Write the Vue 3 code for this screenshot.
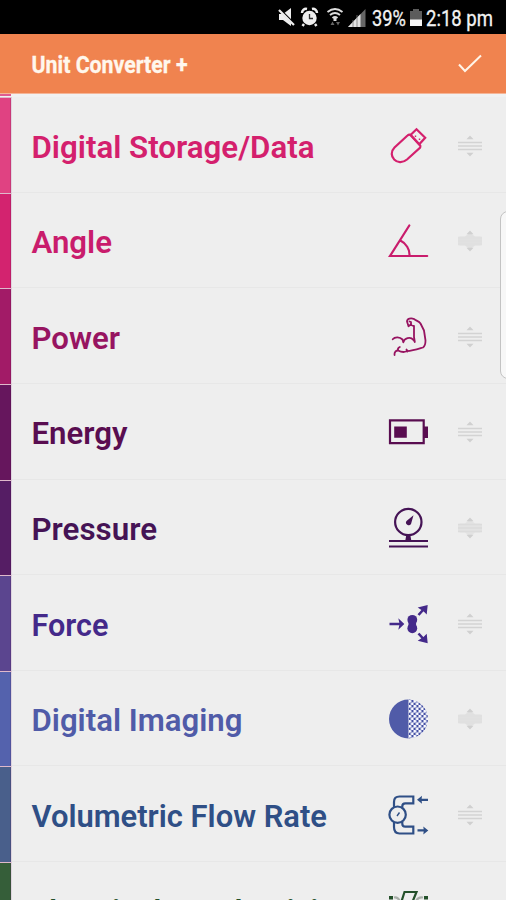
<script setup>
const rows = [
  { label: 'Digital Storage/Data', width: 283, baseline: 37, color: '#d4206d', strip: '#e04282', icon: 'usb', handle: 'lines' },
  { label: 'Angle', width: 80.5, baseline: 37, color: '#c91c6c', strip: '#d3236f', icon: 'angle', handle: 'solid' },
  { label: 'Power', width: 88.5, baseline: 37, color: '#971461', strip: '#a21b67', icon: 'power', handle: 'lines' },
  { label: 'Energy', width: 96, baseline: 37, color: '#590d50', strip: '#66165d', icon: 'energy', handle: 'lines' },
  { label: 'Pressure', width: 125.5, baseline: 37, color: '#451355', strip: '#551d64', icon: 'pressure', handle: 'mixed' },
  { label: 'Force', width: 77, baseline: 37, color: '#44298a', strip: '#5b458f', icon: 'force', handle: 'lines' },
  { label: 'Digital Imaging', width: 211, baseline: 37, color: '#505ba8', strip: '#5462ad', icon: 'imaging', handle: 'solid' },
  { label: 'Volumetric Flow Rate', width: 295.5, baseline: 37, color: '#2f4f86', strip: '#495f8b', icon: 'flow', handle: 'lines' },
  { label: 'Electrical Conductivity', width: 313, baseline: 36.2, color: '#24502a', strip: '#355e39', icon: 'conductivity', handle: 'lines' },
]
</script>

<template>
  <div class="screen">
    <div class="status">
      <svg class="status-icons" width="96" height="34" viewBox="0 0 96 34">
        <g fill="#eee">
          <path d="M2 14h4l8-6v18l-8-6H2z" />
          <path d="M1 8l16 16" stroke="#000" stroke-width="2.500" />
          <path d="M2 10l15 15" stroke="#eee" stroke-width="2.200" />
          <circle cx="32.500" cy="18" r="7.200" />
          <path d="M25 13a4 4 0 0 1 5-4M40 13a4 4 0 0 0-5-4M27 24l-1.500 2M38 24l1.500 2" stroke="#eee" stroke-width="2.500" fill="none" />
          <path d="M32.500 14v4.500h3.500" fill="none" stroke="#333" stroke-width="1.300" />
        </g>
        <g fill="none" stroke="#ddd" stroke-width="1.900">
          <path d="M50.500 12q7.500-6 15 0M53 15q5-4 10 0M55.500 18q2.500-2 5 0" />
          <path d="M58 17v4" stroke-width="3" />
        </g>
        <path d="M53.500 25l2-3.500 2 3.500zM59 22h4l-2 3.500z" fill="#666" />
        <path d="M71 27L88.500 9v18z" fill="#666" />
        <path d="M71 27L83.500 14v13z" fill="#e4e4e4" />
        <path d="M76 27v-7M80 27V15" stroke="#777" stroke-width=".8" />
      </svg>
      <svg class="status-text" width="36" height="34">
        <text x="0" y="25.500" textLength="34" lengthAdjust="spacingAndGlyphs">39%</text>
      </svg>
      <svg class="battery" width="12" height="34" viewBox="0 0 12 34">
        <path d="M3 9h6v2h3v15H0V11h3z" fill="#5c5c5c" />
        <path d="M0 19.500h12V26H0z" fill="#f5f5f5" />
      </svg>
      <svg class="status-text" width="70" height="34">
        <text x="0" y="25.500" textLength="67" lengthAdjust="spacingAndGlyphs">2:18 pm</text>
      </svg>
    </div>

    <header class="bar">
      <svg class="title" width="160" height="59">
        <text x="-0.500" y="39.300" textLength="156" lengthAdjust="spacingAndGlyphs">Unit Converter +</text>
      </svg>
      <svg width="26" height="20" viewBox="0 0 26 20">
        <path d="M2 10.500L8 17 24 1.500" fill="none" stroke="#fff5e9" stroke-width="2" />
      </svg>
    </header>

    <main class="list">
      <div class="previous">
        <div class="previous-strip"></div>
      </div>
      <div v-for="row in rows" :key="row.label" class="row" :style="{ color: row.color }">
        <div class="strip" :style="{ backgroundColor: row.strip }"></div>
        <div class="content">
          <svg class="label" width="340" height="50">
            <text x="-0.500" :y="row.baseline" :textLength="row.width" lengthAdjust="spacingAndGlyphs">{{ row.label }}</text>
          </svg>
          <svg class="icon" width="48" height="48" viewBox="0 0 48 48" fill="none" stroke="currentColor" stroke-width="2.200">
            <g v-if="row.icon === 'usb'">
              <path d="M23.500 13.500L10.500 25.500C2.500 33.500 13.500 45.500 23 37.500L36.200 25.500Q37 24 35.500 22.700L26.600 12.800Q25 12 23.500 13.500z" />
              <path d="M26.500 13L32.500 7.300 41.200 15.800 35.200 22.300z" />
              <path d="M31.500 13.500v1.500M35.500 16.500v1.500" stroke-width="1.400" />
            </g>
            <g v-else-if="row.icon === 'angle'" stroke-linecap="round">
              <path d="M25.300 8.500L6 39h37.200M16 23.300c6 3 10 9 9.500 15.500" />
            </g>
            <g v-else-if="row.icon === 'power'" stroke-width="1.800" stroke-linecap="round" stroke-linejoin="round">
              <path d="M8.700 26.300C11 23.500 16 24 18.500 26.500l.8 2.800c1-4 7-6 10-2.500l1.500 2M30 13v11l.8 5M30 13c-1.700 0-2.500-.7-3.200-1.500l-2.300 1.700-1.500-4.700c0-3 4-4 7-2.500 2 1.700 5 2 6.500 4.500l3.500 7 1.500 10c0 3.500-1 6-2.500 7-5 1.500-10 3.300-16 3.700M10.500 42c-.3-3 1.500-4.500 3.500-4.500-.5-2 .5-3 1.800-3.500M14 37.500c3 1.500 6 2 8.500.8M22.500 36.500l1 2" />
              <path d="M25.500 8.500l1.500.5v3" />
            </g>
            <g v-else-if="row.icon === 'energy'">
              <path d="M6 12.300h33.700v22.900H6z" />
              <path d="M40 18.500h4V30h-4zM10.200 18.500h12.600v11.300H10.200z" fill="currentColor" stroke="none" />
            </g>
            <g v-else-if="row.icon === 'pressure'">
              <circle cx="24.300" cy="18" r="13.200" />
              <path d="M22.300 31h4l1 5.500h-6zM29.500 11.300L27 20a2.600 2.600 0 1 1-4.500-3z" fill="currentColor" stroke="none" />
              <path d="M5 37h39M5 42.500h39" />
            </g>
            <g v-else-if="row.icon === 'force'" fill="currentColor">
              <path d="M5.500 24h12M34.500 15l5-5.500M34.500 33.500l5 5.500" stroke-width="2.600" />
              <path d="M14.300 18.300l6 5.700-6 5.700 1.300-5.700zM43.700 5l-1 9.500-3-3-6-4zM43.700 43.300l-1-9.500-3 3-6 4z" stroke="none" />
              <g stroke="none">
                <circle cx="28.300" cy="19.800" r="4.900" />
                <circle cx="28.300" cy="28.300" r="4.900" />
                <path d="M24.500 20h7.600v8h-7.600z" />
              </g>
            </g>
            <g v-else-if="row.icon === 'imaging'" stroke="none">
              <defs>
                <pattern id="halftone" x="24.500" y="5" width="5" height="5" patternUnits="userSpaceOnUse">
                  <rect width="5" height="5" fill="#4450a4" />
                  <circle cx="1.250" cy="1.250" r="1.600" fill="#fbfbff" />
                  <circle cx="3.750" cy="3.750" r="1.600" fill="#fbfbff" />
                </pattern>
              </defs>
              <path d="M24.500 4.500a19.500 19.500 0 0 0 0 39z" fill="currentColor" />
              <path d="M24.500 4.500a19.500 19.500 0 0 1 0 39z" fill="url(#halftone)" />
            </g>
            <g v-else-if="row.icon === 'flow'">
              <path d="M10 16v-5q0-5.500 5.500-5.500h13.800v6.800h-8q-3 0-3 3v1.500M10 31v5q0 6.500 5.500 6.500h13.800v-6.800h-8q-3 0-3-3V31" />
              <circle cx="13.600" cy="23.700" r="8.200" />
              <path d="M13 25l2.500-3.500" stroke-width="1.400" />
              <path d="M36 8.800h8M33.500 39.400h8" />
              <path d="M33 8.800l5-4-.5 4 .5 4zM44.300 39.400l-5-4 .5 4-.5 4z" fill="currentColor" stroke="none" />
            </g>
            <g v-else>
              <path d="M17 16l3.500-11h12L28 16" />
              <path d="M5 9h4v3.500H5zM40 9h4v3.500h-4z" fill="currentColor" stroke="none" />
              <path d="M10 10.500q4-1 6 4M39 10.500q-5-1-7 4" stroke="#a9afa9" />
            </g>
          </svg>
          <svg class="handle" :class="row.handle" width="26" height="24" viewBox="0 0 26 24">
            <path class="block" d="M3 7.500h5l5-4 5 4h5l2 1.500v6l-2 1.500h-5l-5 4-5-4H3L1 15V9z" />
            <path class="bars" d="M1 8.500h24M1 12h24M1 15.500h24" />
            <path class="tips" d="M9.500 5.300L13 1.500l3.500 3.800zM9.500 18.700L13 22.500l3.500-3.800z" />
          </svg>
        </div>
      </div>
    </main>
    <div class="edge-panel"></div>
  </div>
</template>

<style>
body {
  background: #eee;
}
</style>

<style scoped>
.screen {
  position: relative;
  display: flex;
  flex-direction: column;
  width: 506px;
  height: 900px;
  overflow: hidden;
  background: #eee;
  font-family: Roboto, sans-serif;
}
svg {
  display: block;
  flex: none;
  overflow: visible;
}
.status {
  display: flex;
  justify-content: flex-end;
  height: 34px;
  flex: none;
  background: #000;
  padding-right: 10px;
}
.status-icons {
  margin-right: -1px;
}
.status-text text {
  font-size: 22px;
  fill: #f2f2f2;
  stroke: #f2f2f2;
  stroke-width: 0.3px;
}
.battery {
  margin-left: 2px;
  margin-right: 4px;
}
.bar {
  display: flex;
  align-items: center;
  justify-content: space-between;
  box-sizing: border-box;
  height: 60px;
  flex: none;
  padding: 0 23px 0 32px;
  background: #f0834f;
  border-bottom: 1px solid #f5b597;
}
.title text {
  font-size: 24.500px;
  font-weight: 700;
  fill: #fff7ed;
  stroke: #fff7ed;
  stroke-width: 0.3px;
}
.list {
  display: flex;
  flex-direction: column;
}
.previous {
  height: 3px;
  flex: none;
  background: #f1f1f1;
}
.previous-strip {
  width: 11px;
  height: 2px;
  background: #df5c91;
}
.row {
  display: flex;
  height: 95.65px;
  flex: none;
}
.strip {
  box-sizing: border-box;
  width: 12px;
  flex: none;
  border-top: 1.500px solid #dfb9cb;
  border-right: 1px solid #dfd5df;
  box-shadow: inset -1px 0 0 rgba(70, 0, 60, 0.15);
}
.content {
  display: flex;
  align-items: center;
  box-sizing: border-box;
  flex: 1;
  padding: 2.500px 23px 0 20px;
  border-bottom: 1px solid #e7e7e7;
}
.label text {
  font-size: 31px;
  font-weight: 600;
  fill: currentColor;
}
.icon {
  margin-left: 12px;
}
.handle {
  margin-left: auto;
}
.bars {
  stroke: #d3d3d3;
  stroke-width: 1.300;
}
.block {
  fill: none;
}
.tips {
  fill: #d0d0d0;
}
.solid .block {
  fill: #e1e1e1;
}
.mixed .block {
  fill: #e3e3e3;
}
.solid .bars {
  stroke: #e0e0e0;
}
.mixed .bars {
  stroke: #dcdcdc;
}
.edge-panel {
  position: absolute;
  box-sizing: border-box;
  left: 500px;
  top: 211px;
  width: 16px;
  height: 168px;
  border: 1px solid #c3c3c3;
  border-radius: 8px;
  background: #f7f7f7;
}
</style>
